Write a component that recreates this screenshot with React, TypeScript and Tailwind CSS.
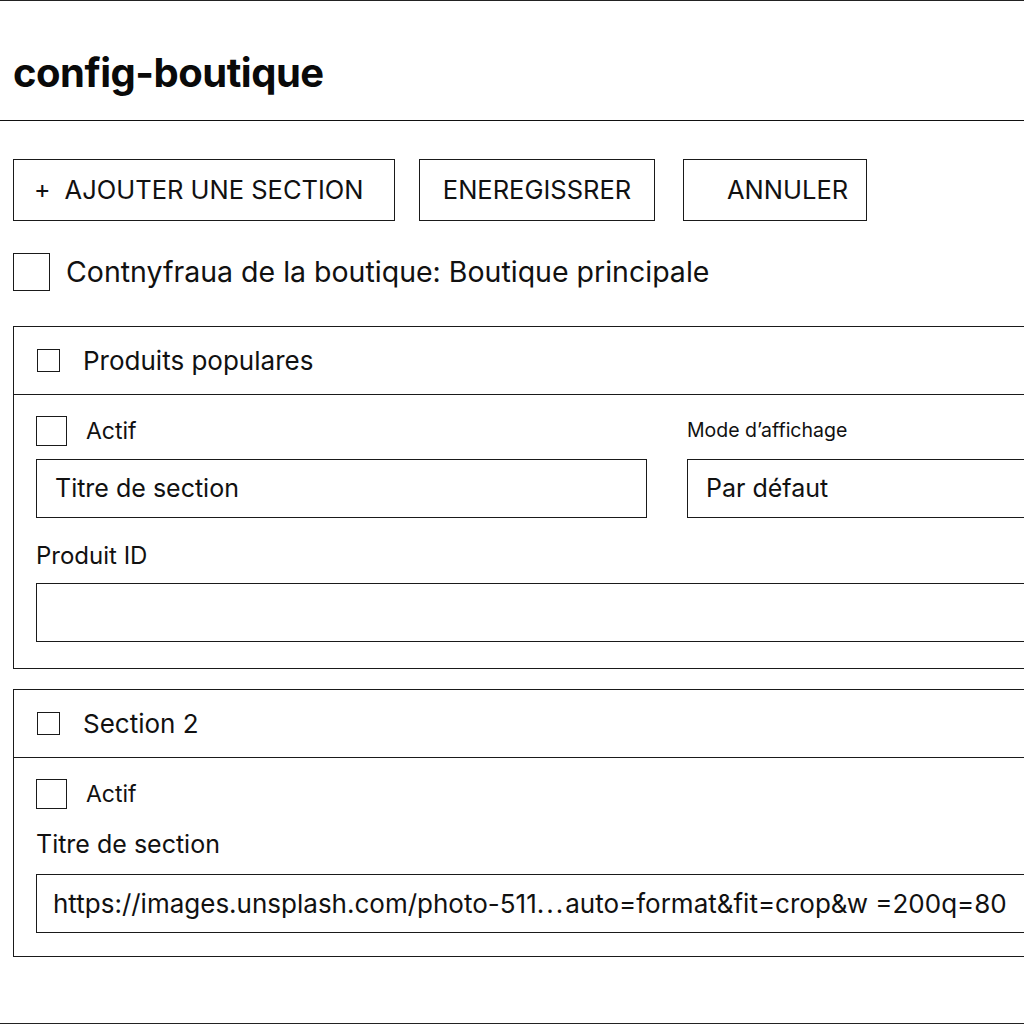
import React from 'react'

const font = { fontFamily: 'Inter, "Noto Sans", sans-serif' }

function Box({ className }: { className: string }) {
  return <span className={`block shrink-0 border-[1.5px] border-[#1a1a1a] bg-white ${className}`} />
}

function Field({ children, className = '' }: { children?: React.ReactNode; className?: string }) {
  return (
    <div className={`flex h-[59px] items-center whitespace-nowrap border-[1.5px] border-[#1a1a1a] px-[18px] text-[25px] text-[#111] ${className}`}>
      {children}
    </div>
  )
}

function SectionCard({ title, children, className = '' }: { title: string; children: React.ReactNode; className?: string }) {
  return (
    <div className={`ml-[13px] w-[1040px] border-[1.5px] border-[#1a1a1a] ${className}`}>
      <div className="flex h-[68px] items-center gap-[23px] border-b-[1.5px] border-[#1a1a1a] pl-[23px]">
        <Box className="h-[23px] w-[23px]" />
        <span className="text-[26px] text-[#111]">{title}</span>
      </div>
      <div className="pl-[22px] pt-[21px]">{children}</div>
    </div>
  )
}

export default function App() {
  return (
    <div className="h-[1024px] w-[1024px] overflow-hidden bg-white" style={font}>
      <div className="flex h-[1024px] w-[1060px] flex-col border-t-[1.5px] border-[#222]">
        <header className="flex h-[120px] items-center border-b-[1.5px] border-[#111] pl-[13px] pt-[24px]">
          <h1 className="text-[40px] font-bold tracking-[-0.5px] text-[#0a0a0a]">config-boutique</h1>
        </header>

        <div className="mt-[38px] flex gap-[24px] pl-[13px]">
          <button className="flex h-[62px] w-[382px] items-center border-[1.5px] border-[#1a1a1a] pl-[20px] text-[25.5px] text-[#111]">
            <span className="mr-[14px] text-[25px]">+</span>AJOUTER UNE SECTION
          </button>
          <button className="flex h-[62px] w-[236px] items-center justify-center border-[1.5px] border-[#1a1a1a] text-[25.5px] text-[#111]">
            ENEREGISSRER
          </button>
          <button className="ml-[4px] flex h-[62px] w-[184px] items-center border-[1.5px] border-[#1a1a1a] pl-[43px] text-[25.5px] text-[#111]">
            ANNULER
          </button>
        </div>

        <div className="mt-[32px] flex h-[38px] items-center gap-[16px] pl-[13px]">
          <Box className="h-[38px] w-[37px]" />
          <span className="text-[28.5px] leading-none text-[#111]">Contnyfraua de la boutique: Boutique principale</span>
        </div>

        <SectionCard title="Produits populares" className="mt-[35px] h-[343px]">
          <div className="flex gap-[40px]">
            <div className="w-[611px]">
              <div className="flex h-[30px] items-center gap-[19px]">
                <Box className="h-[30px] w-[31px]" />
                <span className="text-[23px] text-[#111]">Actif</span>
              </div>
              <Field className="mt-[13px]">Titre de section</Field>
            </div>
            <div className="flex-1">
              <div className="flex h-[30px] items-center text-[19.5px] text-[#111]">Mode d’affichage</div>
              <Field className="mt-[13px]">Par défaut</Field>
            </div>
          </div>
          <div className="mt-[20px] text-[24px] text-[#111]">Produit ID</div>
          <Field className="mt-[9px]" />
        </SectionCard>

        <SectionCard title="Section 2" className="mt-[20px] h-[268px]">
          <div className="flex h-[30px] items-center gap-[19px]">
            <Box className="h-[30px] w-[31px]" />
            <span className="text-[23px] text-[#111]">Actif</span>
          </div>
          <div className="mt-[17px] text-[25px] text-[#111]">Titre de section</div>
          <Field className="mt-[10px] pl-[16px] text-[26px]">
            https://images.unsplash.com/photo-511<span className="tracking-[2px]">...</span>auto=format&amp;fit=crop&amp;w =200q=80
          </Field>
        </SectionCard>

        <div className="mt-auto border-b-[1.5px] border-[#222]" />
      </div>
    </div>
  )
}
